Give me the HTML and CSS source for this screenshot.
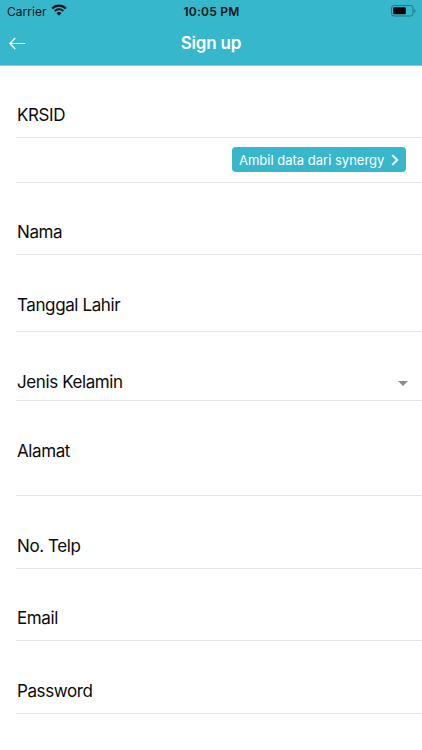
FILE: index.html
```html
<!DOCTYPE html>
<html lang="id">
<head>
  <meta charset="utf-8">
  <meta name="viewport" content="width=device-width, initial-scale=1">
  <title>Sign up</title>
  <link rel="stylesheet" href="styles.css">
</head>
<body>
  <header class="header">
    <div class="status-bar">
      <div class="carrier">
        <span>Carrier</span>
        <svg class="wifi" width="16" height="12" viewBox="0 0 16 12">
          <path d="M1.2 4.5a9.6 9.6 0 0 1 13.6 0" fill="none" stroke="#061417" stroke-width="2.2"/>
          <path d="M3.7 7.1a6.1 6.1 0 0 1 8.6 0" fill="none" stroke="#061417" stroke-width="2"/>
          <path d="M8 11.8L5.5 9.3a3.5 3.5 0 0 1 5 0z" fill="#061417"/>
        </svg>
      </div>
      <span class="time">10:05 PM</span>
      <div class="battery">
        <svg width="25" height="12" viewBox="0 0 25 12">
          <rect x=".5" y=".5" width="21.5" height="10.5" rx="2.6" fill="none" stroke="#207582"/>
          <rect x="2.2" y="2.2" width="12.6" height="7.1" rx="1" fill="#000"/>
          <path d="M23.3 4v4c.8-.4 1.2-1.1 1.2-2s-.4-1.6-1.2-2z" fill="#207582"/>
        </svg>
      </div>
    </div>
    <div class="nav-bar">
      <a href="#" class="back">
        <svg width="17" height="13" viewBox="0 0 17 13">
          <path d="M6.2 1L.9 6.5l5.3 5.5M1 6.5h15.4" fill="none" stroke="#fff" stroke-width="1.2"/>
        </svg>
      </a>
      <h1>Sign up</h1>
    </div>
  </header>

  <form class="form">
    <div class="field">
      <label>KRSID</label>
    </div>
    <div class="field field-button">
      <button type="button" class="btn">
        <span>Ambil data dari synergy</span>
        <svg width="8" height="12" viewBox="0 0 8 12">
          <path d="M1.2 1l5 5-5 5" fill="none" stroke="#fff" stroke-width="1.9"/>
        </svg>
      </button>
    </div>
    <div class="field">
      <label>Nama</label>
    </div>
    <div class="field field-date">
      <label>Tanggal Lahir</label>
    </div>
    <div class="field field-select">
      <label>Jenis Kelamin</label>
      <svg width="10" height="5" viewBox="0 0 10 5">
        <path d="M0 0h10L5 5z" fill="#8c8c8c"/>
      </svg>
    </div>
    <div class="field field-area">
      <label>Alamat</label>
    </div>
    <div class="field field-tall">
      <label>No. Telp</label>
    </div>
    <div class="field">
      <label>Email</label>
    </div>
    <div class="field field-tall">
      <label>Password</label>
    </div>
  </form>
</body>
</html>
```

FILE: styles.css
```css
* {
  box-sizing: border-box;
}

body {
  margin: 0;
  background: #fff;
  color: #0a0a0a;
  font-family: Inter, "Liberation Sans", sans-serif;
  overflow: hidden;
}

.header {
  height: 66px;
  background: #37b7cc;
  border-bottom: 1px solid #7fcbd8;
  background-clip: padding-box;
}

.status-bar {
  display: grid;
  grid-template-columns: 1fr auto 1fr;
  align-items: center;
  height: 22px;
  padding: 0 6px 0 7px;
  color: #061417;
  font-size: 12px;
}

.carrier {
  display: flex;
  align-items: center;
  gap: 4px;
  letter-spacing: 0.05px;
}

.wifi {
  margin-top: -2px;
}

.time {
  font-weight: 600;
  letter-spacing: 0.25px;
}

.battery {
  display: flex;
  justify-content: flex-end;
}

.nav-bar {
  display: grid;
  grid-template-columns: 1fr auto 1fr;
  align-items: center;
  height: 42px;
  padding: 0 9px;
}

.back {
  display: flex;
}

.nav-bar h1 {
  margin: 0;
  color: #fff;
  font-size: 17px;
  font-weight: 600;
  letter-spacing: -0.2px;
  line-height: 22px;
}

.form {
  padding-left: 16px;
}

.field {
  height: 72px;
  padding: 38px 0 0 1px;
  border-bottom: 1px solid #e8e8e8;
}

.field label {
  display: block;
  font-size: 17px;
  letter-spacing: -0.4px;
  line-height: 22px;
}

.field-button {
  display: flex;
  align-items: flex-start;
  justify-content: flex-end;
  height: 45px;
  padding: 9px 16px 0 0;
}

.btn {
  display: flex;
  align-items: center;
  justify-content: space-between;
  width: 174px;
  height: 25px;
  padding: 0 7px;
  border: 0;
  border-radius: 4px;
  background: #37b7cc;
  color: #fff;
  font-family: inherit;
  font-size: 13px;
  white-space: nowrap;
}

.field-date {
  height: 77px;
  padding-top: 39px;
}

.field-select {
  display: flex;
  align-items: flex-start;
  justify-content: space-between;
  height: 69px;
  padding: 39px 14px 0 1px;
}

.field-select svg {
  margin-top: 10px;
}

.field-area {
  height: 95px;
  padding-top: 39px;
}

.field-tall {
  height: 73px;
  padding-top: 39px;
}
```
